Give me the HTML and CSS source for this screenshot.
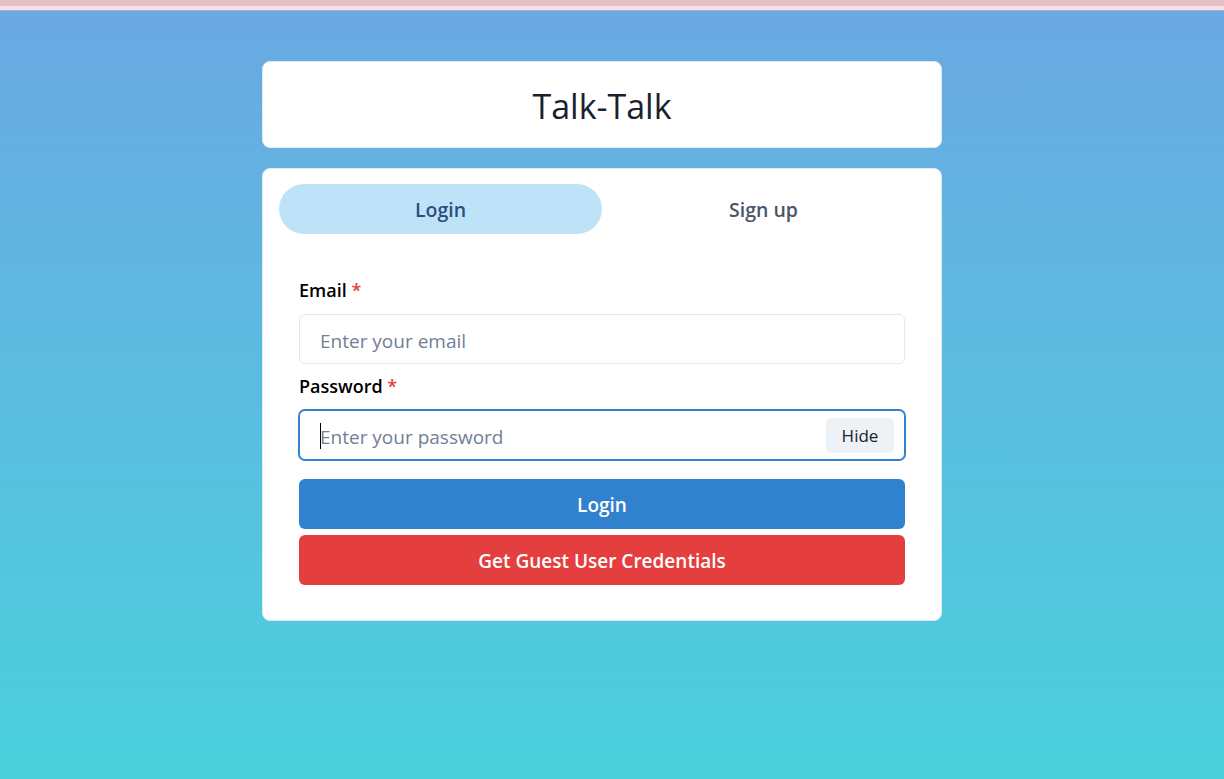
FILE: index.html
```html
<!DOCTYPE html>
<html lang="en">
<head>
<meta charset="utf-8">
<title>Talk-Talk</title>
<link rel="stylesheet" href="styles.css">
</head>
<body>
<div class="topstrip"><div class="strip-a"></div><div class="strip-b"></div><div class="strip-c"></div></div>
<main class="page">
  <header class="brand">
    <h1 class="brand-title">Talk-Talk</h1>
  </header>
  <section class="card">
    <div class="tabs">
      <button class="tab tab-active" type="button">Login</button>
      <button class="tab" type="button">Sign up</button>
    </div>
    <form class="panel">
      <div class="field">
        <label class="label">Email <span class="req">*</span></label>
        <input class="input" type="email" placeholder="Enter your email">
      </div>
      <div class="field field-next">
        <label class="label">Password <span class="req">*</span></label>
        <div class="input input-focus input-group">
          <span class="caret"></span>
          <input class="inner-input" type="password" placeholder="Enter your password">
          <button class="hide-btn" type="button">Hide</button>
        </div>
      </div>
      <button class="btn btn-blue" type="button">Login</button>
      <button class="btn btn-red" type="button">Get Guest User Credentials</button>
    </form>
  </section>
</main>
</body>
</html>
```
FILE: styles.css
```css
* { box-sizing: border-box; }
html, body { margin: 0; padding: 0; }
body {
  min-height: 779px;
  background: linear-gradient(to bottom, #6ba8e3 0%, #4ad1dc 100%);
  font-family: "Open Sans", "Noto Sans", sans-serif;
  color: #1a202c;
  padding-right: 20px;
}
.topstrip { display: flex; flex-direction: column; margin-right: -20px; }
.strip-a { height: 6px; background: #e2c0c6; }
.strip-b { height: 4px; background: #fddde6; }
.strip-c { height: 1px; background: #a9b2cb; }

.page {
  width: 680px;
  margin: 0 auto;
  padding-top: 50px;
  display: flex;
  flex-direction: column;
  gap: 20px;
}
.brand {
  height: 87px;
  padding-top: 3px;
  background: #fff;
  border: 1px solid #e2e8f0;
  border-radius: 8px;
  display: flex;
  align-items: center;
  justify-content: center;
}
.brand-title {
  margin: 0;
  font-size: 34px;
  font-weight: 400;
  line-height: 1;
  color: #1a202c;
}
.card {
  background: #fff;
  border: 1px solid #e2e8f0;
  border-radius: 8px;
  padding: 15px 16px 16px;
}
.tabs { display: flex; }
.tab {
  flex: 1;
  height: 50px;
  padding: 1px 0 0;
  border: 0;
  background: transparent;
  border-radius: 9999px;
  font-family: inherit;
  font-size: 19.5px;
  font-weight: 600;
  color: #4a5568;
  cursor: pointer;
}
.tab-active { background: #bee3f8; color: #2c4f7c; }

.panel {
  padding: 41px 20px 19px;
  display: flex;
  flex-direction: column;
}
.field { display: flex; flex-direction: column; }
.field-next { margin-top: 7px; }
.label {
  font-size: 18px;
  font-weight: 600;
  line-height: 27px;
  padding-top: 2px;
  margin-bottom: 10px;
  color: #000;
}
.req { color: #e53e3e; }
.input {
  height: 50px;
  border: 1px solid #e2e8f0;
  border-radius: 6px;
  padding: 4px 20px 0;
  font-family: inherit;
  font-size: 19px;
  color: #1a202c;
  background: #fff;
  outline: none;
  width: 100%;
}
.input::placeholder, .inner-input::placeholder { color: #718096; opacity: 1; }
.input-focus {
  border-color: #3182ce;
  box-shadow: 0 0 0 1px #3182ce;
}
.input-group {
  display: flex;
  align-items: center;
  padding: 0 10px 0 20px;
  position: relative;
}
.caret {
  position: absolute;
  left: 20px;
  top: 12px;
  width: 1px;
  height: 26px;
  background: #000;
}
.inner-input {
  flex: 1;
  min-width: 0;
  border: 0;
  outline: none;
  padding: 4px 0 0;
  font-family: inherit;
  font-size: 19px;
  background: transparent;
  color: #1a202c;
}
.hide-btn {
  width: 68px;
  height: 35px;
  padding: 1px 0 0;
  border: 0;
  border-radius: 6px;
  background: #edf2f7;
  font-family: inherit;
  font-size: 17px;
  font-weight: 500;
  color: #1a202c;
}
.btn {
  height: 50px;
  padding: 2px 0 0;
  border: 0;
  border-radius: 6px;
  font-family: inherit;
  font-size: 19px;
  font-weight: 600;
  color: #fff;
  width: 100%;
}
.btn-blue { background: #3182ce; margin-top: 19px; }
.btn-red { background: #e53e3e; margin-top: 6px; }
```
